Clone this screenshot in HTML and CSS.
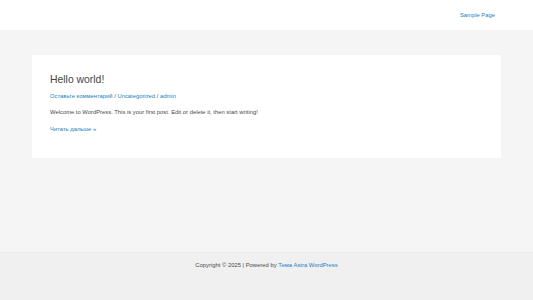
FILE: index.html
```html
<!DOCTYPE html>
<html lang="ru">
<head>
  <meta charset="UTF-8">
  <meta name="viewport" content="width=device-width, initial-scale=1.0">
  <title>Hello world!</title>
  <link rel="stylesheet" href="styles.css">
</head>
<body>
  <header class="site-header">
    <nav class="main-nav">
      <a href="#">Sample Page</a>
    </nav>
  </header>

  <main class="site-content">
    <article class="post-card">
      <h2 class="post-title">Hello world!</h2>
      <div class="post-meta">
        <a href="#">Оставьте комментарий</a> / <a href="#">Uncategorized</a> / <a href="#">admin</a>
      </div>
      <p class="post-excerpt">Welcome to WordPress. This is your first post. Edit or delete it, then start writing!</p>
      <a class="read-more" href="#">Читать дальше »</a>
    </article>
  </main>

  <footer class="site-footer">
    <p>Copyright © 2025 | Powered by <a href="#">Тема Astra WordPress</a></p>
  </footer>
</body>
</html>
```

FILE: styles.css
```css
html, body {
  height: 100%;
}
body {
  margin: 0;
  display: flex;
  flex-direction: column;
  background-color: #f5f5f5;
  color: #4a4a4a;
  font-family: 'Liberation Sans', Arial, sans-serif;
  font-size: 5.85px;
  line-height: 1.6;
}
a {
  color: #1a80c4;
  text-decoration: none;
}
.site-header {
  height: 30px;
  background-color: #fff;
  display: flex;
  align-items: center;
  justify-content: flex-end;
  padding: 2px 38px 0 0;
  box-sizing: border-box;
  flex-shrink: 0;
}
.main-nav a {
  font-size: 5.85px;
}
.site-content {
  flex: 1;
  padding: 25px 32px 0;
}
.post-card {
  background-color: #fff;
  padding: 19px 18px 23px;
}
.post-title {
  margin: 0 0 6px;
  font-size: 10.4px;
  font-weight: normal;
  line-height: 1.2;
  color: #444;
}
.post-meta {
  line-height: 1.6;
}
.post-excerpt {
  margin: 6px 0 8px;
}
.read-more {
  line-height: 1.6;
}
.site-footer {
  height: 48px;
  flex-shrink: 0;
  background-color: #f0f0f0;
  border-top: 1px solid #e9e9e9;
  text-align: center;
  box-sizing: border-box;
}
.site-footer p {
  margin: 8px 0 0;
}
```
